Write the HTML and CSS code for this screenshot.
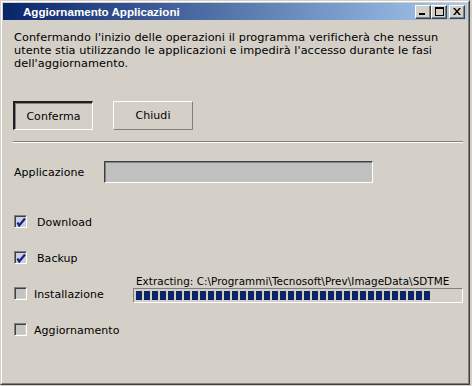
FILE: index.html
```html
<!DOCTYPE html>
<html lang="it">
<head>
<meta charset="utf-8">
<title>Aggiornamento Applicazioni</title>
<link rel="stylesheet" href="styles.css">
</head>
<body>
<div class="window">
  <div class="frame">
    <div class="titlebar">
      <span class="title">Aggiornamento Applicazioni</span>
      <div class="tbtns">
        <span class="tbtn"><svg width="8" height="7" viewBox="0 0 8 7"><rect x="0" y="5" width="6" height="2" fill="#000"/></svg></span>
        <span class="tbtn"><svg width="9" height="9" viewBox="0 0 9 9"><rect x="0.5" y="0.5" width="8" height="8" fill="none" stroke="#000"/><rect x="0" y="0" width="9" height="2" fill="#000"/></svg></span>
        <span class="tbtn close"><svg width="8" height="7" viewBox="0 0 8 7"><path d="M0 0h2l2 2.5L6 0h2L5 3.5 8 7H6L4 4.5 2 7H0l3-3.5z" fill="#000"/></svg></span>
      </div>
    </div>
    <div class="content">
      <p class="intro">Confermando l'inizio delle operazioni il programma verificherà che nessun utente stia utilizzando le applicazioni e impedirà l'accesso durante le fasi dell'aggiornamento.</p>
      <div class="buttons">
        <span class="btn default">Conferma</span>
        <span class="btn">Chiudi</span>
      </div>
      <div class="sep"></div>
      <div class="field">
        <span class="flabel">Applicazione</span>
        <span class="input"></span>
      </div>
      <div class="checks">
        <div class="row">
          <span class="cb checked"><svg width="10" height="10" viewBox="0 0 10 10"><path d="M1.5 5.5 L3.2 8.5 L9 1.5" fill="none" stroke="#14228c" stroke-width="2.2" stroke-linejoin="miter"/></svg></span>
          <span class="clabel on">Download</span>
        </div>
        <div class="row">
          <span class="cb checked"><svg width="10" height="10" viewBox="0 0 10 10"><path d="M1.5 5.5 L3.2 8.5 L9 1.5" fill="none" stroke="#14228c" stroke-width="2.2" stroke-linejoin="miter"/></svg></span>
          <span class="clabel on">Backup</span>
        </div>
        <div class="row">
          <span class="cb"></span>
          <span class="clabel">Installazione</span>
          <div class="progress">
            <div class="ptext">Extracting: C:\Programmi\Tecnosoft\Prev\ImageData\SDTME</div>
            <div class="pbar"><div class="pfill"></div></div>
          </div>
        </div>
        <div class="row">
          <span class="cb"></span>
          <span class="clabel">Aggiornamento</span>
        </div>
      </div>
    </div>
  </div>
</div>
</body>
</html>
```
FILE: styles.css
```css
html, body {
  margin: 0;
  padding: 0;
  background: #d4d0c8;
}
.window {
  width: 470px;
  height: 385px;
  box-sizing: border-box;
  border-top: 1px solid #d4d0c8;
  border-left: 1px solid #d4d0c8;
  border-right: 1px solid #404040;
  border-bottom: 1px solid #404040;
  background: #d4d0c8;
}
.frame {
  height: 100%;
  box-sizing: border-box;
  border-top: 1px solid #ffffff;
  border-left: 1px solid #ffffff;
  border-right: 1px solid #808080;
  border-bottom: 1px solid #808080;
  padding: 1px;
}
.titlebar {
  height: 17px;
  background: linear-gradient(to right, #0a246a, #a6caf0);
  display: flex;
  align-items: center;
  justify-content: space-between;
  padding-left: 20px;
  padding-right: 2px;
}
.title {
  color: #fff;
  font-family: "Liberation Sans", Arial, sans-serif;
  font-weight: bold;
  font-size: 11.6px;
  line-height: 17px;
}
.tbtns {
  display: flex;
  align-items: center;
}
.tbtn {
  width: 16px;
  height: 14px;
  box-sizing: border-box;
  background: #d4d0c8;
  border-top: 1px solid #fff;
  border-left: 1px solid #fff;
  border-right: 1px solid #404040;
  border-bottom: 1px solid #404040;
  box-shadow: inset -1px -1px 0 #808080;
  display: flex;
  align-items: center;
  justify-content: center;
}
.tbtn.close { margin-left: 2px; }
.content {
  padding: 0 0 0 11px;
  font-family: "DejaVu Sans", Verdana, sans-serif;
  font-size: 11px;
  letter-spacing: 0.05px;
  color: #000;
}
.intro {
  margin: 11px 0 0 0;
  font-size: 11.3px;
  line-height: 13px;
  width: 446px;
}
.buttons {
  display: flex;
  gap: 20px;
  margin-top: 31px;
  margin-left: -1px;
}
.btn {
  width: 80px;
  height: 29px;
  box-sizing: border-box;
  display: flex;
  align-items: center;
  justify-content: center;
  border-top: 1px solid #fff;
  border-left: 1px solid #fff;
  border-right: 1px solid #808080;
  border-bottom: 1px solid #808080;
}
.btn.default {
  border-top: 2px solid #202020;
  border-left: 2px solid #202020;
  border-right: 1px solid #fff;
  border-bottom: 1px solid #fff;
  box-shadow: inset 1px 1px 0 #808080;
}
.sep {
  margin-top: 11px;
  margin-left: -1px;
  width: 450px;
  height: 1px;
  background: #808080;
  border-bottom: 1px solid #fff;
}
.field {
  display: grid;
  grid-template-columns: 90px 269px;
  align-items: center;
  margin-top: 18px;
}
.input {
  height: 22px;
  box-sizing: border-box;
  background: #c0c0c0;
  border-top: 1px solid #404040;
  border-left: 1px solid #404040;
  border-right: 1px solid #fff;
  border-bottom: 1px solid #fff;
  box-shadow: inset 1px 1px 0 #808080;
}
.checks {
  margin-top: 32px;
  display: flex;
  flex-direction: column;
  gap: 23px;
}
.row {
  height: 13px;
  display: grid;
  grid-template-columns: 13px 106px 330px;
  align-items: start;
}
.cb {
  width: 13px;
  height: 13px;
  box-sizing: border-box;
  background: #c4c4c4;
  border-top: 1px solid #808080;
  border-left: 1px solid #808080;
  border-right: 1px solid #fff;
  border-bottom: 1px solid #fff;
  box-shadow: inset 1px 1px 0 #404040, inset -1px -1px 0 #d4d0c8;
  display: flex;
  align-items: center;
  justify-content: center;
}
.cb.checked { background: #ccd0e0; }
.clabel {
  line-height: 15px;
  padding-left: 7px;
  white-space: nowrap;
}
.clabel.on { padding-left: 10px; }
.progress {
  margin-top: -11px;
  display: flex;
  flex-direction: column;
}
.ptext {
  font-size: 10.4px;
  line-height: 11px;
  height: 12px;
  padding-left: 3px;
  white-space: nowrap;
}
.pbar {
  height: 15px;
  box-sizing: border-box;
  border-top: 1px solid #808080;
  border-left: 1px solid #808080;
  border-right: 1px solid #fff;
  border-bottom: 1px solid #fff;
  padding: 2px 2px;
}
.pfill {
  width: 294px;
  height: 9px;
  background: repeating-linear-gradient(to right, #0a246a 0 6px, transparent 6px 8px);
}
```
